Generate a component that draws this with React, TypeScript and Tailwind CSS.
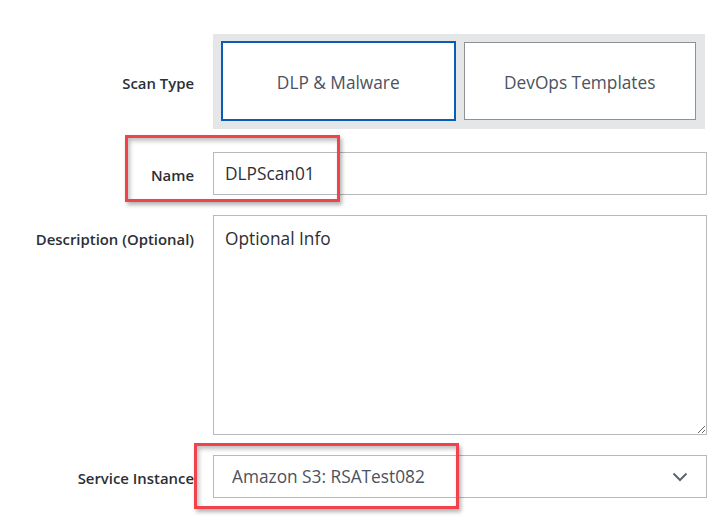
import React from "react";

export default function App() {
  return (
    <div className="relative w-[723px] h-[519px] bg-white overflow-hidden font-['Open_Sans',sans-serif]">
      <div className="flex flex-col pt-[34px]">
        {/* Scan Type */}
        <div className="flex items-center">
          <div className="w-[213px] pr-[19px] pt-[3px] text-right text-[14.9px] leading-[20px] font-semibold text-[#2b2f36]">
            Scan Type
          </div>
          <div className="w-[492px] h-[95px] bg-[#e5e6e8] px-[8px] pt-[7px] pb-[8px] flex gap-[7px]">
            <div className="flex-1 border-2 border-[#0b5cb5] bg-white flex items-center justify-center pt-[3px] text-[17.3px] text-[#4b5260]">
              DLP &amp; Malware
            </div>
            <div className="flex-1 m-px border border-[#8e9196] bg-white flex items-center justify-center pt-[3px] text-[17.3px] text-[#4b5260]">
              DevOps Templates
            </div>
          </div>
        </div>

        {/* Name */}
        <div className="flex items-center mt-[23px]">
          <div className="w-[213px] pr-[19px] pt-[2px] text-right text-[14.9px] leading-[20px] font-semibold text-[#2b2f36]">
            Name
          </div>
          <div className="w-[494px] h-[43px] border border-[#b6b9bd] bg-white flex items-center px-[11px] text-[17.3px] text-[#2b2f36]">
            DLPScan01
          </div>
        </div>

        {/* Description */}
        <div className="flex items-start mt-[20px]">
          <div className="w-[213px] pr-[19px] pt-[14px] text-right text-[14.9px] leading-[20px] font-semibold text-[#2b2f36]">
            Description (Optional)
          </div>
          <textarea
            readOnly
            defaultValue="Optional Info"
            className="w-[494px] h-[220px] border border-[#b6b9bd] bg-white px-[11px] pt-[11px] text-[17.3px] leading-[24px] text-[#2b2f36] outline-none font-['Open_Sans',sans-serif]"
          />
        </div>

        {/* Service Instance */}
        <div className="flex items-center mt-[20px]">
          <div className="w-[213px] pr-[19px] pt-[3px] text-right text-[14.9px] leading-[20px] font-semibold text-[#2b2f36]">
            Service Instance
          </div>
          <div className="w-[494px] h-[43px] border border-[#b6b9bd] bg-white flex items-center justify-between pl-[18px] pr-[18px] text-[17.3px] text-[#4b5260]">
            <span>Amazon S3: RSATest082</span>
            <svg width="16" height="10" viewBox="0 0 16 10" fill="none">
              <path d="M1.5 1.5 L8 8 L14.5 1.5" stroke="#5f6673" strokeWidth="2" />
            </svg>
          </div>
        </div>
      </div>

      {/* Annotation boxes */}
      <div className="absolute left-[125px] top-[135px] w-[215px] h-[67px] border-[3px] border-[#f2434a] shadow-[2px_3px_4px_rgba(0,0,0,0.3),inset_2px_3px_4px_rgba(0,0,0,0.25)]" />
      <div className="absolute left-[194px] top-[443px] w-[265px] h-[66px] border-[3px] border-[#f2434a] shadow-[2px_3px_4px_rgba(0,0,0,0.3),inset_2px_3px_4px_rgba(0,0,0,0.25)]" />
    </div>
  );
}
